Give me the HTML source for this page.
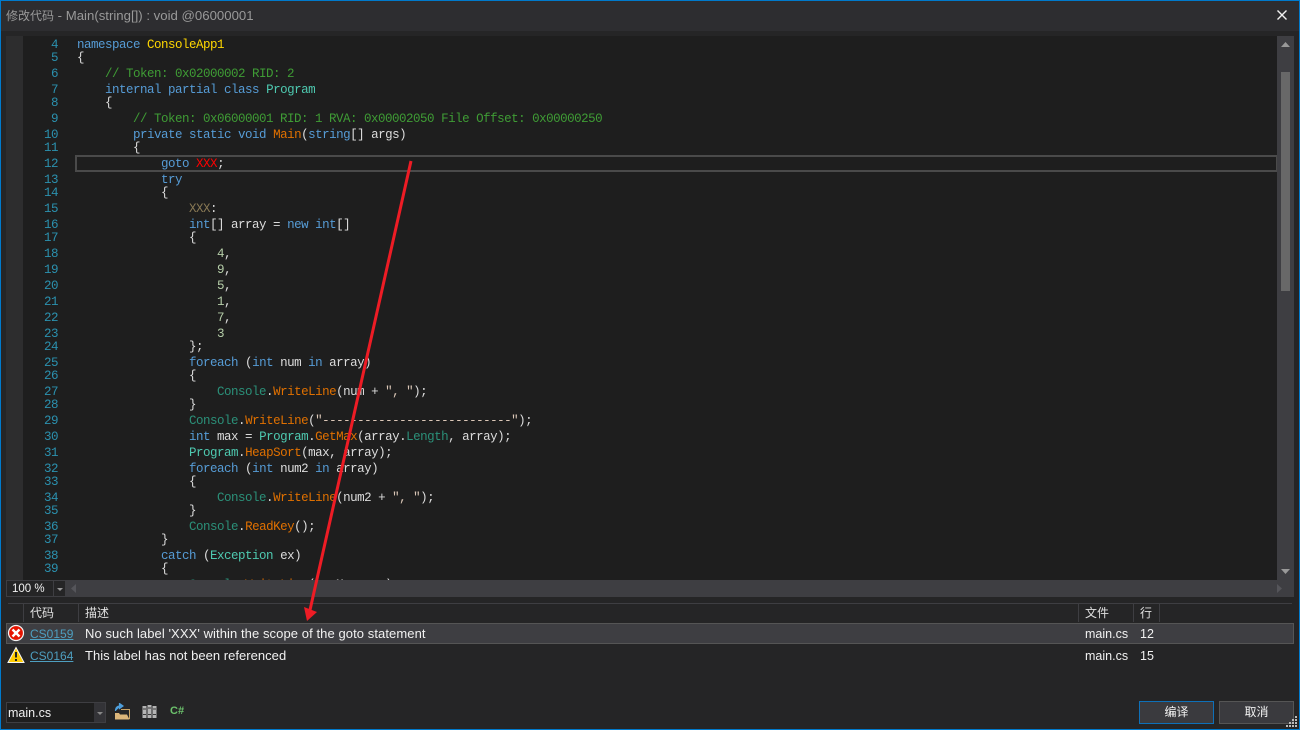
<!DOCTYPE html>
<html><head><meta charset="utf-8">
<style>
html,body{margin:0;padding:0;width:1300px;height:730px;overflow:hidden;background:#252526}
#r{position:absolute;left:0;top:0;width:1300px;height:730px;overflow:hidden;background:#252526;font-family:"Liberation Sans","Noto Sans CJK SC",sans-serif;font-size:13px;color:#f1f1f1}
.a{position:absolute;white-space:nowrap}
#code{position:absolute;left:23px;top:36px;width:1254px;height:544px;overflow:hidden;background:#1e1e1e}
.l,.n{position:absolute;margin-top:1px;height:16px;line-height:16px;font-family:"Liberation Mono",monospace;font-size:12.5px;letter-spacing:-.5px;white-space:pre;color:#dcdcdc}
.l{left:54px}
.n{left:0;width:35px;text-align:right;color:#2b91af}
.k{color:#569cd6}.t{color:#4ec9b0}.m{color:#e07000}.c{color:#3f9c35}.d{color:#b5cea8}.o{color:#2b9079}.s{color:#dcc8b8}
.cell{position:absolute;white-space:nowrap;line-height:18px;font-size:13px;letter-spacing:.08px;color:#f1f1f1}
.h{font-size:12px;letter-spacing:0;color:#e0e0e0}
.f{font-size:12.500px;letter-spacing:0}
.link{font-size:12px;letter-spacing:0;color:#4e9fc0;text-decoration:underline}
.sep{position:absolute;top:604px;width:1px;height:18px;background:#3e3e42}
.btn{position:absolute;top:701px;width:73px;height:21px;background:#3a3a3e;border:1px solid #555;text-align:center;line-height:21px;font-size:12px;color:#f1f1f1}
</style></head><body>
<div id="r">
<div class="a" style="left:0;top:0;width:1300px;height:31px;background:#2d2d30"></div>
<div class="a" style="left:6px;top:8px;line-height:16px;font-size:13.200px;color:#999"><span style="font-size:12px">修改代码</span> - Main(string[]) : void @06000001</div>
<svg class="a" style="left:1276px;top:9px" width="12" height="12"><path d="M1.500 1.500L10.500 10.500M10.500 1.500L1.500 10.500" stroke="#f1f1f1" stroke-width="1.400"/></svg>

<div class="a" style="left:6px;top:36px;width:17px;height:544px;background:#2d2d2e"></div>
<div id="code">
<div class="a" style="left:52px;top:119px;width:1199px;height:13px;border:2px solid #4a4a4a;border-right-width:1px"></div>
<div class="n" style="top:0">4</div><div class="l" style="top:0"><span class="k">namespace</span> <span style="color:#ffd700">ConsoleApp1</span></div>
<div class="n" style="top:13px">5</div><div class="l" style="top:13px">{</div>
<div class="n" style="top:29px">6</div><div class="l c" style="top:29px">    // Token: 0x02000002 RID: 2</div>
<div class="n" style="top:45px">7</div><div class="l" style="top:45px">    <span class="k">internal partial class</span> <span class="t">Program</span></div>
<div class="n" style="top:58px">8</div><div class="l" style="top:58px">    {</div>
<div class="n" style="top:74px">9</div><div class="l c" style="top:74px">        // Token: 0x06000001 RID: 1 RVA: 0x00002050 File Offset: 0x00000250</div>
<div class="n" style="top:90px">10</div><div class="l" style="top:90px">        <span class="k">private static void</span> <span class="m">Main</span>(<span class="k">string</span>[] args)</div>
<div class="n" style="top:103px">11</div><div class="l" style="top:103px">        {</div>
<div class="n" style="top:119px">12</div><div class="l" style="top:119px">            <span class="k">goto</span> <span style="color:#f00">XXX</span>;</div>
<div class="n" style="top:135px">13</div><div class="l" style="top:135px">            <span class="k">try</span></div>
<div class="n" style="top:148px">14</div><div class="l" style="top:148px">            {</div>
<div class="n" style="top:164px">15</div><div class="l" style="top:164px">                <span style="color:#8a7a55">XXX</span>:</div>
<div class="n" style="top:180px">16</div><div class="l" style="top:180px">                <span class="k">int</span>[] array = <span class="k">new int</span>[]</div>
<div class="n" style="top:193px">17</div><div class="l" style="top:193px">                {</div>
<div class="n" style="top:209px">18</div><div class="l" style="top:209px">                    <span class="d">4</span>,</div>
<div class="n" style="top:225px">19</div><div class="l" style="top:225px">                    <span class="d">9</span>,</div>
<div class="n" style="top:241px">20</div><div class="l" style="top:241px">                    <span class="d">5</span>,</div>
<div class="n" style="top:257px">21</div><div class="l" style="top:257px">                    <span class="d">1</span>,</div>
<div class="n" style="top:273px">22</div><div class="l" style="top:273px">                    <span class="d">7</span>,</div>
<div class="n" style="top:289px">23</div><div class="l" style="top:289px">                    <span class="d">3</span></div>
<div class="n" style="top:302px">24</div><div class="l" style="top:302px">                };</div>
<div class="n" style="top:318px">25</div><div class="l" style="top:318px">                <span class="k">foreach</span> (<span class="k">int</span> num <span class="k">in</span> array)</div>
<div class="n" style="top:331px">26</div><div class="l" style="top:331px">                {</div>
<div class="n" style="top:347px">27</div><div class="l" style="top:347px">                    <span class="o">Console</span>.<span class="m">WriteLine</span>(num + <span class="s">", "</span>);</div>
<div class="n" style="top:360px">28</div><div class="l" style="top:360px">                }</div>
<div class="n" style="top:376px">29</div><div class="l" style="top:376px">                <span class="o">Console</span>.<span class="m">WriteLine</span>(<span class="s">"---------------------------"</span>);</div>
<div class="n" style="top:392px">30</div><div class="l" style="top:392px">                <span class="k">int</span> max = <span class="t">Program</span>.<span class="m">GetMax</span>(array.<span class="o">Length</span>, array);</div>
<div class="n" style="top:408px">31</div><div class="l" style="top:408px">                <span class="t">Program</span>.<span class="m">HeapSort</span>(max, array);</div>
<div class="n" style="top:424px">32</div><div class="l" style="top:424px">                <span class="k">foreach</span> (<span class="k">int</span> num2 <span class="k">in</span> array)</div>
<div class="n" style="top:437px">33</div><div class="l" style="top:437px">                {</div>
<div class="n" style="top:453px">34</div><div class="l" style="top:453px">                    <span class="o">Console</span>.<span class="m">WriteLine</span>(num2 + <span class="s">", "</span>);</div>
<div class="n" style="top:466px">35</div><div class="l" style="top:466px">                }</div>
<div class="n" style="top:482px">36</div><div class="l" style="top:482px">                <span class="o">Console</span>.<span class="m">ReadKey</span>();</div>
<div class="n" style="top:495px">37</div><div class="l" style="top:495px">            }</div>
<div class="n" style="top:511px">38</div><div class="l" style="top:511px">            <span class="k">catch</span> (<span class="t">Exception</span> ex)</div>
<div class="n" style="top:524px">39</div><div class="l" style="top:524px">            {</div>
<div class="l" style="top:540px">                <span class="o">Console</span>.<span class="m">WriteLine</span>(ex.Message);</div>
</div>

<div class="a" style="left:1277px;top:36px;width:17px;height:544px;background:#3e3e42"></div>
<div class="a" style="left:1281px;top:72px;width:9px;height:219px;background:#686868"></div>
<svg class="a" style="left:1277px;top:36px" width="17" height="544"><path d="M4 11L8.500 6L13 11Z M4 533L13 533L8.500 538Z" fill="#999"/></svg>

<div class="a" style="left:6px;top:580px;width:1288px;height:17px;background:#3e3e42"></div>
<div class="a" style="left:7px;top:581px;width:46px;height:15px;background:#252526;line-height:16px;font-size:11.500px;padding-left:5px;box-sizing:border-box;color:#f1f1f1">100 %</div>
<div class="a" style="left:54px;top:581px;width:11px;height:15px;background:#252526"></div>
<svg class="a" style="left:54px;top:581px" width="11" height="15"><path d="M3 7H9L6 10Z" fill="#999"/></svg>
<svg class="a" style="left:70px;top:581px" width="1214" height="15"><path d="M6 3V12L1 7.500Z" fill="#55555a"/><path d="M1207 3V12L1212 7.500Z" fill="#55555a"/></svg>

<div class="a" style="left:8px;top:603px;width:1284px;height:1px;background:#3e3e42"></div>
<div class="sep" style="left:23px"></div><div class="sep" style="left:78px"></div><div class="sep" style="left:1078px"></div><div class="sep" style="left:1133px"></div><div class="sep" style="left:1159px"></div>
<div class="cell h" style="left:30px;top:604px">代码</div>
<div class="cell h" style="left:85px;top:604px">描述</div>
<div class="cell h" style="left:1085px;top:604px">文件</div>
<div class="cell h" style="left:1140px;top:604px">行</div>

<div class="a" style="left:6px;top:623px;width:1286px;height:19px;background:#3e3e42;border:1px solid #555"></div>
<svg class="a" style="left:7px;top:624px" width="18" height="18"><circle cx="9" cy="9" r="7.500" fill="#e51400" stroke="#f4f4f4" stroke-width="1.200"/><path d="M5.500 5.500L12.500 12.500M12.500 5.500L5.500 12.500" stroke="#fff" stroke-width="2.400"/></svg>
<svg class="a" style="left:7px;top:646px" width="18" height="18"><path d="M9 1.500L17 16.500H1Z" fill="#ffcc00" stroke="#f4f4f4" stroke-width="1"/><path d="M9 6V11.500M9 13V15" stroke="#222" stroke-width="2"/></svg>
<div class="cell link" style="left:30px;top:625px">CS0159</div>
<div class="cell" style="left:85px;top:625px">No such label 'XXX' within the scope of the goto statement</div>
<div class="cell f" style="left:1085px;top:625px">main.cs</div>
<div class="cell f" style="left:1140px;top:625px">12</div>
<div class="cell link" style="left:30px;top:647px">CS0164</div>
<div class="cell" style="left:85px;top:647px;letter-spacing:.03px">This label has not been referenced</div>
<div class="cell f" style="left:1085px;top:647px">main.cs</div>
<div class="cell f" style="left:1140px;top:647px">15</div>

<div class="a" style="left:6px;top:702px;width:87px;height:19px;background:#1e1e1e;border:1px solid #3e3e42;line-height:20px;padding-left:1px;font-size:12.500px;color:#f1f1f1">main.cs</div>
<div class="a" style="left:94px;top:702px;width:11px;height:19px;background:#333337;border:1px solid #3e3e42;border-left:0"></div>
<svg class="a" style="left:94px;top:702px" width="12" height="21"><path d="M3 10H9L6 13Z" fill="#888"/></svg>
<svg class="a" style="left:114px;top:703px" width="17" height="18"><path d="M7 6.500H15.500V16" fill="none" stroke="#c8a264" stroke-width="1"/><path d="M1 10V16.500H15.500L13 11.500H6L5 10Z" fill="#dcb67a"/><path d="M1.500 8C1.500 3.500 4 3 7 3M5.500 0.500V5.500L9 3Z" fill="#4e9fdc" stroke="#4e9fdc" stroke-width="1.200"/></svg>
<svg class="a" style="left:142px;top:705px" width="16" height="14"><rect x="0.500" y="1" width="4" height="12" fill="#b4b4b4"/><rect x="5.500" y="0" width="4" height="13" fill="#b4b4b4"/><rect x="10.500" y="1" width="4" height="12" fill="#b4b4b4"/><path d="M1 4H4M6 3H9M11 4H14M1 9.500H4M6 9.500H9M11 9.500H14" stroke="#3a3a3a" stroke-width="1"/></svg>
<div class="a" style="left:170px;top:705px;font-size:11px;line-height:13px;font-weight:bold;color:#6cc26c">C#</div>

<div class="btn" style="left:1139px;border-color:#0e70b8">编译</div>
<div class="btn" style="left:1219px">取消</div>
<svg class="a" style="left:1285px;top:716px" width="14" height="12" fill="#bbb"><rect x="10" y="0" width="2" height="2"/><rect x="7" y="3" width="2" height="2"/><rect x="10" y="3" width="2" height="2"/><rect x="4" y="6" width="2" height="2"/><rect x="7" y="6" width="2" height="2"/><rect x="10" y="6" width="2" height="2"/><rect x="1" y="9" width="2" height="2"/><rect x="4" y="9" width="2" height="2"/><rect x="7" y="9" width="2" height="2"/><rect x="10" y="9" width="2" height="2"/></svg>

<svg class="a" style="left:0;top:0" width="1300" height="730"><path d="M411 161L310 610" stroke="#ee1c25" stroke-width="3" fill="none"/><path d="M304 607L317 612L307 621Z" fill="#ee1c25"/></svg>

<div class="a" style="left:0;top:0;width:1298px;height:728px;border:1px solid #007acc"></div>
</div>
</body></html>
